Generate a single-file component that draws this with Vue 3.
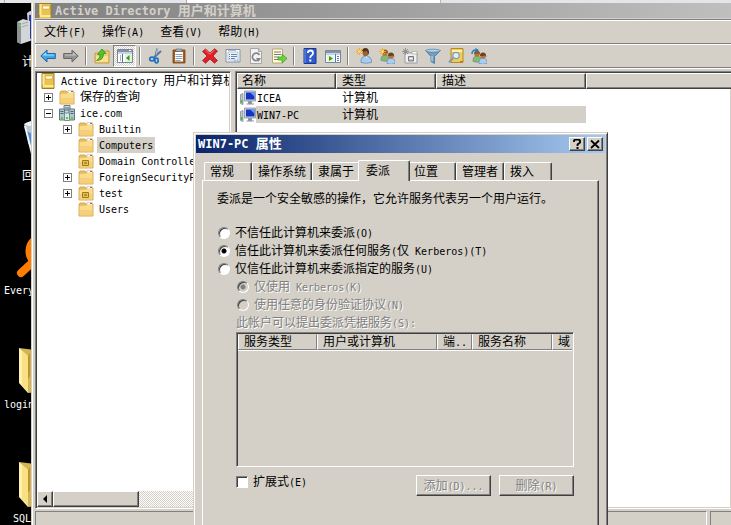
<script setup>
import { h, ref } from 'vue'

// Latin runs are set smaller so that they take half of the width of a Chinese character
const Txt = (props) =>
  h('span', { class: 'txt' }, props.t.match(/[\x00-\x7f]+|[^\x00-\x7f]+/g).map((run) =>
    /[\x00-\x7f]/.test(run) ? h('span', { class: 'latin' }, run) : run))
Txt.props = ['t']

const person = (x, y, hair, shirt) =>
  `<path d="M${x} ${y + 10.5}v-2q0-2.500 3-3.500h2q3 1 3 3.500v2q-4 1.500-8 0z" fill="${shirt}" stroke="#5683b5" stroke-width=".6"/><circle cx="${x + 4}" cy="${y + 3}" r="2.700" fill="#b9733a"/><path d="M${x + 1} ${y + 3}q0-3.500 3-3.500t3.200 3.500v1.500l-1-2q-3 .5-5.200.5z" fill="${hair}"/>`
const spark = '<path d="M3.500 0v7M0 3.500h7M1 1l5 5M6 1L1 6" stroke="#f5a623" stroke-width="1"/><circle cx="3.500" cy="3.500" r="1.300" fill="#ffe27a"/>'
const folder = '<path d="M1 3.500L2 2h5l1 1h7v12H1z" fill="#e9c063" stroke="#c9993c" stroke-width=".8"/><path d="M9 1.500h5.500V4H9z" fill="#fff" stroke="#d2a757" stroke-width=".5"/><path d="M12 2h2v1h-2z" fill="#3b7fd0"/><path d="M1.500 5h6l1-1h6v10.500h-13z" fill="#fbdc8c"/><path d="M2 9h12v5H2z" fill="#f5d079"/>'

const icons = {
  back: '<path d="M.8 8L7 2v3.500h8.300v5H7V14z" fill="#3fa9e8" stroke="#1c64ad"/><path d="M2.500 7.500L6 4.200v2.300h8v1z" fill="#a3dcfa"/>',
  forward: '<path d="M15.200 8L9 2v3.500H.7v5H9V14z" fill="#949494" stroke="#666"/><path d="M13.500 7.500L10 4.200v2.300H2v1z" fill="#c3c3c3"/>',
  up: '<path d="M1 5h5l1-2h8v12H1z" fill="#f3cf6c" stroke="#bd8e32" stroke-width=".8"/><path d="M2 8h12v6H2z" fill="#fadf8d"/><path d="M2.500 12.500Q6 11 6 6.500H3.500L8 1l4 4.500H9.500q0 7-7 7z" fill="#4fc62c" stroke="#268714" stroke-width=".7"/>',
  panes: '<path d="M.5 1.500h15v13H.5z" fill="#fff" stroke="#7b8797"/><path d="M1 2h14v2H1z" fill="#8292ad"/><path d="M12 2.500h2" stroke="#fff"/><path d="M1 5h14" stroke="#9aa6b8"/><path d="M5.500 6v8M3 8h1M3 10h1M3 12h1" stroke="#57708f"/><path d="M8 6h7v8H8z" fill="#e6f3dd"/><path d="M12.500 7v6L9 10z" fill="#28a221"/>',
  cut: '<path d="M9.500 0L7 9M13 3L5.500 10" stroke="#55738f" stroke-width="1.800"/><path d="M9.500 0L8 7" stroke="#d8ecff" stroke-width=".7"/><ellipse cx="4" cy="11" rx="2.300" ry="1.800" fill="none" stroke="#1d72c4" stroke-width="1.700"/><ellipse cx="8.500" cy="12.500" rx="1.700" ry="2.300" fill="none" stroke="#1d72c4" stroke-width="1.700"/>',
  paste: '<path d="M2 2h12v13H2z" fill="#a65d20" stroke="#78400f" stroke-width=".8"/><path d="M4 4h8v9.500H4z" fill="#fff"/><path d="M4.500 6.500h7M4.500 8.500h7M4.500 10.500h7M4.500 12.500h5" stroke="#8ba0b8"/><path d="M5 1h6v2.500H5z" fill="#a9adb5" stroke="#5d6570" stroke-width=".6"/>',
  remove: '<path d="M3.500 1L8 5 12.500.700 15.500 3 11 8l4.500 4.500-3 2.800L8 11l-4.500 4.300L.5 12.500 5 8 .5 3.500z" fill="#df2028" stroke="#a50d13" stroke-width=".7"/><path d="M3.500 2L8 6.200 12.500 2" fill="none" stroke="#ff7870"/>',
  props: '<path d="M1 1.500h14v12.500H1z" fill="#fbfdff" stroke="#8494a6"/><path d="M3 4h10v8H3z" fill="#eef3f9" stroke="#a4b3c4" stroke-width=".7"/><path d="M4 6.500h1m1 0h6M4 8.500h1m1 0h6M4 10.500h1m1 0h4" stroke="#5f8ab9"/><path d="M3 2.500h8" stroke="#b1bfce"/><path d="M9 13h2m1 0h2" stroke="#70a5d5"/>',
  refresh: '<path d="M2.500.5h8l3 3v12h-11z" fill="#f3f3f3" stroke="#a5a5a5"/><path d="M10.500.5v3h3" fill="#d4d4d4" stroke="#a5a5a5"/><path d="M11 11.500A3.800 3.800 0 1 1 11.500 7" fill="none" stroke="#858585" stroke-width="1.700"/><path d="M8 10h5l-2.500 4z" fill="#858585"/>',
  export: '<path d="M1.500 1h10v14h-10z" fill="#fffbe2" stroke="#b9a66a"/><path d="M3 4h7M3 6.500h7M3 9h5M3 11.500h5" stroke="#7b7b70"/><path d="M7 9h4V6l5 4.500-5 4.500v-3H7z" fill="#6bd33a" stroke="#389b18" stroke-width=".7"/>',
  help: '<path d="M2 .5h12v15H2z" fill="#3159c9" stroke="#183891"/><path d="M3 1v14" stroke="#7394ed"/><path d="M5.800 5q0-2.500 2.600-2.500T11 5q0 1.500-1.500 2.400T8.300 10" fill="none" stroke="#fff" stroke-width="1.800"/><path d="M7.300 11.500h2v2h-2z" fill="#fff"/>',
  console: '<path d="M.5 2.500h15v12H.5z" fill="#fff" stroke="#7b8797"/><path d="M1 3h14v2H1z" fill="#8292ad"/><path d="M1 6h14" stroke="#9aa6b8"/><path d="M2 7h7v7H2z" fill="#e9f5e1"/><path d="M4 8v5l4-2.500z" fill="#28a221"/><path d="M10.500 6v8M12 8.500h2M12 10.500h2M12 12.500h2" stroke="#4c78ad"/>',
  user: '<path d="M5 14.500v-2.500q.5-3 4-4h2q4 1 4.500 4v2.500q-5 1.500-10.500 0z" fill="#a9cdef" stroke="#5683b5" stroke-width=".7"/><path d="M9.500 8.500l1 1.500 1-1.500z" fill="#fff"/><ellipse cx="9.500" cy="4.500" rx="3" ry="3.700" fill="#a05f30"/><path d="M6 4Q6 0 9.500 0T13 5l-1 2q0-4-2-4-2 1-4 1z" fill="#54351c"/>' + spark,
  users: person(2, 2, '#8a5a2a', '#86bd60') + person(8, 5, '#67431e', '#a9cdef') + spark,
  newou: '<path d="M3 5h12v10H3z" fill="#f0f0f0" stroke="#9a9a9a"/><path d="M10 3.500h5V6h-5z" fill="#fafafa" stroke="#999" stroke-width=".6"/><path d="M6.500 8.500h5v4.500h-5z" fill="#c3c3c3" stroke="#777"/><path d="M7.500 10.500h3" stroke="#fff"/><path d="M3.500 0v7M0 3.500h7M1 1l5 5M6 1L1 6" stroke="#909090"/>',
  filter: '<path d="M.7 2.500L6 8.500v5l3.500 2V8.500l5.800-6z" fill="#719ec3" stroke="#40709a" stroke-width=".8"/><ellipse cx="8" cy="2.700" rx="7.300" ry="1.500" fill="#b6d4e9" stroke="#4e7da4" stroke-width=".7"/><path d="M7 8v5" stroke="#cbe2f2"/>',
  find: '<path d="M3 .5h12v14H3z" fill="#f0cd5a" stroke="#b78b23"/><path d="M4 2h10v2H4z" fill="#fff3a8"/><path d="M12 13.500h3" stroke="#a97d1c"/><path d="M5 10l-4 4.500" stroke="#8197ad" stroke-width="2"/><circle cx="8" cy="7.500" r="3.200" fill="#dceefa" stroke="#7e9bb3" stroke-width="1.200"/>',
  group: person(2, 3, '#8a5a2a', '#86bd60') + person(8, 5, '#67431e', '#a9cdef') + '<path d="M1 6Q1 2 5 2" fill="none" stroke="#247cc5" stroke-width="1.500"/><path d="M4.500 0L8 2 4.500 4.500z" fill="#247cc5"/>',
  folder,
  ou: folder + '<path d="M4.500 7.500h6v5h-6z" fill="#e3c554" stroke="#9c7a18"/><path d="M6 10h3" stroke="#7d5f0c"/>',
  book: '<path d="M2 .5h12v15H2z" fill="#e9c34e" stroke="#a17c21"/><path d="M2.500 1h2v11h-2z" fill="#fbe899"/><path d="M5.500 3h7v3h-7z" fill="#fffce5" stroke="#bd972e" stroke-width=".5"/><path d="M3 13h10.500" stroke="#fff5b7" stroke-width="1.500"/>',
  domain: '<path d="M5 .5h6v11H5z" fill="#c9d8df" stroke="#667f8a"/><path d="M.5 4h5v11h-5zM10 4h5.500v11H10z" fill="#b2c6cf" stroke="#5f7984"/><path d="M6 3h4M6 5h4M1.500 6.500h3M1.500 8.500h3M11.500 6.500h3M11.500 8.500h3" stroke="#4c6773"/><path d="M5.500 8h5v7.500h-5z" fill="#dbe7eb" stroke="#758d97"/><path d="M2 12h2v2H2zM7 12h2v2H7zM12 12h2v2h-2z" fill="#59ce28"/>',
  computer: '<path d="M.5 4.500L3 3.500v11l-2.500-1z" fill="#c0c6cb" stroke="#77818a" stroke-width=".7"/><path d="M1 10h1.500v3H1z" fill="#46ba3a"/><path d="M4.500 1h11v10h-11z" fill="#c9d1da" stroke="#8290a0" stroke-width=".8"/><path d="M6 2.500h8.500v7H6z" fill="#1735c5"/><path d="M10 2.500h4.500v4z" fill="#6f9af5"/><path d="M8.500 11.500h3v2h-3zM6.500 14h7.500" fill="#8993a0" stroke="#8993a0" stroke-width="1"/>',
}

const menus = ['文件(F)', '操作(A)', '查看(V)', '帮助(H)']
const tools = [
  ['back', '后退'], ['forward', '前进'], null,
  ['up', '向上'], ['panes', '控制台树', true], null,
  ['cut', '剪切'], ['paste', '粘贴'], null,
  ['remove', '删除'], ['props', '属性'], ['refresh', '刷新'], ['export', '导出列表'], null,
  ['help', '帮助'], ['console', '操作窗格'], null,
  ['user', '新建用户'], ['users', '新建组'], ['newou', '新建组织单位'], ['filter', '筛选'], ['find', '查找'], ['group', '添加到组'],
]
const tree = [
  { level: 0, icon: 'book', name: 'Active Directory 用户和计算机' },
  { level: 1, mark: '+', icon: 'folder', name: '保存的查询' },
  { level: 1, mark: '-', icon: 'domain', name: 'ice.com' },
  { level: 2, mark: '+', icon: 'folder', name: 'Builtin' },
  { level: 2, icon: 'folder', name: 'Computers', selected: true },
  { level: 2, icon: 'ou', name: 'Domain Controllers' },
  { level: 2, mark: '+', icon: 'folder', name: 'ForeignSecurityPrincipals' },
  { level: 2, mark: '+', icon: 'ou', name: 'test' },
  { level: 2, icon: 'folder', name: 'Users' },
]
const computers = [
  { name: 'ICEA', type: '计算机' },
  { name: 'WIN7-PC', type: '计算机', selected: true },
]
const tabs = ['常规', '操作系统', '隶属于', '委派', '位置', '管理者', '拨入']
const activeTab = ref('委派')
const trust = ref('any')
const protocol = ref('kerberos')
const expanded = ref(false)
const trustOptions = [
  ['none', '不信任此计算机来委派(O)'],
  ['any', '信任此计算机来委派任何服务(仅 Kerberos)(T)'],
  ['listed', '仅信任此计算机来委派指定的服务(U)'],
]
const protocolOptions = [
  ['kerberos', '仅使用 Kerberos(K)'],
  ['all', '使用任意的身份验证协议(N)'],
]
</script>

<template>
  <div class="screen">
    <div class="strip"><i></i><i></i><i></i><i></i></div>

    <div class="workspace">
      <aside class="desktop">
        <div class="shortcut pc">
          <svg viewBox="0 0 48 48"><path d="M11 6l3-2 30-2v28l-31 4z" fill="#c9ccd6" /><path d="M13 8l28-4v24l-28 4z" fill="#2238a8" /><path d="M1 15l6-3 7 2v20l-9 3-4-2z" fill="#d3d6d8" /><path d="M1 15l4 1v21l-4-2z" fill="#8d9296" /><path d="M6 17l6-2M6 20l6-2" stroke="#a3a8ac" /><path d="M3 17h2v3H3z" fill="#5bd045" /></svg>
          <Txt t="计算机" />
        </div>
        <div class="shortcut bin">
          <svg viewBox="0 0 48 48"><path d="M5 6l30-4-5 42q-8 4-15 0z" fill="#b7cad8" /><path d="M5 6q14 7 30-4-14-4-30 4z" fill="#eff5f9" /><path d="M8 13l8 5-3 9-4-1zM12 30l7-4v12l-5-2z" fill="#4a8edb" /><path d="M6 8l9 36" stroke="#f1f6fa" stroke-width="2" /></svg>
          <Txt t="回收站" />
        </div>
        <div class="shortcut search">
          <svg viewBox="0 0 48 48"><circle cx="28" cy="16" r="15" fill="none" stroke="#ff7e00" stroke-width="7" /><path d="M17 27L5 38" stroke="#ff7e00" stroke-width="8" stroke-linecap="round" /></svg>
          <Txt t="Everything" />
        </div>
        <div class="shortcut file">
          <svg viewBox="0 0 48 48"><path d="M2 1l38 5v38l-29 2z" fill="#d6b451" /><path d="M2 1l9 8v37L2 36z" fill="#fff0ac" /><path d="M5 4l6 5v36l-6-7z" fill="#f9e085" /><path d="M11 9l2-3v23l-2 3z" fill="#b99531" /></svg>
          <Txt t="login" />
        </div>
        <div class="shortcut sql">
          <svg viewBox="0 0 48 48"><path d="M2 1l38 5v38l-29 2z" fill="#d6b451" /><path d="M2 1l9 8v37L2 36z" fill="#fff0ac" /><path d="M5 4l6 5v36l-6-7z" fill="#f9e085" /><path d="M11 9l2-3v23l-2 3z" fill="#b99531" /></svg>
          <Txt t="SQL" />
        </div>
      </aside>

      <main class="window">
        <header class="titlebar inactive">
          <svg class="icon" viewBox="0 0 16 16" v-html="icons.book"></svg>
          <Txt t="Active Directory 用户和计算机" />
        </header>
        <nav class="menubar">
          <button v-for="m in menus" :key="m" type="button"><Txt :t="m" /></button>
        </nav>
        <div class="toolbar" role="toolbar">
          <template v-for="(tool, i) in tools" :key="i">
            <button v-if="tool" type="button" :class="{ pressed: tool[2] }" :aria-label="tool[1]">
              <svg class="icon" viewBox="0 0 16 16" v-html="icons[tool[0]]"></svg>
            </button>
            <i v-else class="sep"></i>
          </template>
        </div>

        <div class="panes">
          <section class="treepane">
            <ul class="tree">
              <li v-for="n in tree" :key="n.name" :class="'level' + n.level">
                <button v-if="n.mark" type="button" class="expander" :aria-label="n.name">
                  <svg viewBox="0 0 7 7"><path :d="n.mark === '+' ? 'M1 3.5h5M3.5 1v5' : 'M1 3.500h5'" stroke="#000" /></svg>
                </button>
                <i v-else-if="n.level" class="noexpander"></i>
                <svg class="icon" viewBox="0 0 16 16" v-html="icons[n.icon]"></svg>
                <span class="name" :class="{ selected: n.selected }"><Txt :t="n.name" /></span>
              </li>
            </ul>
            <div class="scrollbar">
              <button type="button" aria-label="向左滚动"><svg viewBox="0 0 8 8"><path d="M6 0v8L2 4z" /></svg></button>
              <span class="thumb"></span>
            </div>
          </section>

          <section class="listpane">
            <table>
              <colgroup><col class="c-name"><col class="c-type"><col class="c-desc"><col></colgroup>
              <thead>
                <tr><th><Txt t="名称" /></th><th><Txt t="类型" /></th><th><Txt t="描述" /></th><th></th></tr>
              </thead>
              <tbody>
                <tr v-for="c in computers" :key="c.name" :class="{ selected: c.selected }">
                  <td><div class="cell"><svg class="icon" viewBox="0 0 16 16" v-html="icons.computer"></svg><Txt :t="c.name" /></div></td>
                  <td><Txt :t="c.type" /></td>
                  <td></td>
                  <td></td>
                </tr>
              </tbody>
            </table>
          </section>
        </div>
        <footer class="statusbar"><span></span><span></span></footer>
      </main>
    </div>

    <section class="dialog" role="dialog" aria-label="WIN7-PC 属性">
      <header class="titlebar active">
        <Txt t="WIN7-PC 属性" />
        <div class="caption">
          <button type="button" aria-label="帮助"><svg viewBox="0 0 10 10"><path d="M2 3V1.500L3 .700h4l1 .8v2L5.500 5.500V7" fill="none" stroke="#000" stroke-width="1.800" /><path d="M4.500 8h2v2h-2z" /></svg></button>
          <button type="button" aria-label="关闭"><svg viewBox="0 0 10 10"><path d="M1 1.500l8 7.500M9 1.500L1 9" stroke="#000" stroke-width="1.800" /></svg></button>
        </div>
      </header>
      <div class="tabs" role="tablist">
        <button v-for="t in tabs" :key="t" type="button" role="tab" :aria-selected="t === activeTab" :class="{ current: t === activeTab }" @click="activeTab = t">
          <Txt :t="t" />
        </button>
      </div>
      <div class="page">
        <p><Txt t="委派是一个安全敏感的操作，它允许服务代表另一个用户运行。" /></p>
        <div class="options">
          <label v-for="o in trustOptions" :key="o[0]">
            <input v-model="trust" type="radio" name="trust" :value="o[0]"><Txt :t="o[1]" />
          </label>
          <label v-for="o in protocolOptions" :key="o[0]" class="sub disabled">
            <input v-model="protocol" type="radio" name="protocol" :value="o[0]" disabled><Txt :t="o[1]" />
          </label>
        </div>
        <div class="services">
          <div id="services-label" class="caption-line disabled"><Txt t="此帐户可以提出委派凭据服务(S):" /></div>
          <div class="listbox">
            <table aria-labelledby="services-label">
              <colgroup><col class="s-type"><col class="s-user"><col class="s-port"><col class="s-name"><col></colgroup>
              <thead>
                <tr><th><Txt t="服务类型" /></th><th><Txt t="用户或计算机" /></th><th><Txt t="端.." /></th><th><Txt t="服务名称" /></th><th><Txt t="域" /></th></tr>
              </thead>
            </table>
          </div>
          <div class="actions">
            <label><input v-model="expanded" type="checkbox"><Txt t="扩展式(E)" /></label>
            <button type="button" class="disabled" disabled><Txt t="添加(D)..." /></button>
            <button type="button" class="disabled" disabled><Txt t="删除(R)" /></button>
          </div>
        </div>
      </div>
    </section>
  </div>
</template>

<style>
body {
  background: #000;
}
.txt {
  white-space: pre;
}
.txt .latin {
  font-size: 10px;
  line-height: 1;
}
.titlebar .txt {
  font-size: 13px;
  font-weight: bold;
}
.titlebar .txt .latin {
  font-size: 12px;
}
</style>

<style scoped>
.screen {
  --face: #d4d0c8;
  --shade: #808080;
  --dark: #404040;
  position: relative;
  height: 100vh;
  display: flex;
  flex-direction: column;
  overflow: hidden;
  background: #000;
  color: #000;
  font: 12px/16px "DejaVu Sans Mono", "Noto Sans CJK SC", monospace;
}
button {
  font: inherit;
  color: inherit;
  padding: 0;
  margin: 0;
  border: 0;
  background: transparent;
}
.icon {
  width: 16px;
  height: 16px;
  flex: none;
}
.strip {
  display: flex;
  height: 3px;
  flex: none;
}
.strip i { background: #e3e5e8; }
.strip i:nth-child(1) { width: 5px; border-right: 1px solid #a9abae; box-sizing: border-box; }
.strip i:nth-child(2) { width: 181px; border-right: 1px solid #a9abae; }
.strip i:nth-child(3) { width: 253px; background: #fff; border-right: 1px solid #b9bbbe; }
.strip i:nth-child(4) { flex: 1; }
.workspace {
  flex: 1;
  min-height: 0;
  display: flex;
}

/* desktop shortcuts, partly covered by the window */
.desktop {
  position: relative;
  width: 31px;
  flex: none;
  overflow: hidden;
  color: #fff;
}
.shortcut {
  position: absolute;
}
.shortcut svg {
  position: absolute;
  width: 48px;
  height: 48px;
}
.pc { left: 22px; top: 51px; }
.pc svg { left: -6px; top: -47px; }
.bin { left: 22px; top: 165px; }
.bin svg { left: -3px; top: -50px; }
.search { left: 4px; top: 279px; }
.search svg { left: 12px; top: -47px; }
.file { left: 4px; top: 393px; }
.file svg { left: 13px; top: -49px; }
.sql { left: 13px; top: 507px; }
.sql svg { left: 4px; top: -49px; }

/* console window */
.window {
  flex: 1;
  min-width: 0;
  display: flex;
  flex-direction: column;
  background: var(--face);
  box-shadow: inset 1px 0 var(--face), inset 2px 0 #fff;
  padding-left: 4px;
}
.titlebar {
  display: flex;
  align-items: center;
  flex: none;
}
.inactive {
  height: 15px;
  gap: 2px;
  padding-left: 2px;
  margin-bottom: 1px;
  overflow: hidden;
  color: var(--face);
  background: linear-gradient(90deg, #808080, #bfbfbf);
}
.menubar,
.toolbar {
  display: flex;
  align-items: center;
  height: 24px;
  box-sizing: border-box;
  flex: none;
  border-top: 1px solid var(--shade);
  box-shadow: inset 1px 1px #fff;
}
.menubar {
  padding: 1px 0 0 1px;
}
.menubar button {
  padding: 0 8px;
}
.toolbar {
  height: 25px;
  padding: 2px 0 1px 1px;
  border-bottom: 1px solid var(--shade);
}
.toolbar button {
  width: 23px;
  height: 22px;
  flex: none;
  display: flex;
  align-items: center;
  justify-content: center;
}
.toolbar .pressed {
  border: 1px solid;
  border-color: var(--shade) #fff #fff var(--shade);
  background: repeating-conic-gradient(#fff 0 25%, var(--face) 0 50%) 0 0 / 2px 2px;
  box-sizing: border-box;
}
.sep {
  width: 2px;
  height: 18px;
  margin: 0 3px;
  box-sizing: border-box;
  border-left: 1px solid var(--shade);
  border-right: 1px solid #fff;
}
.panes {
  flex: 1;
  min-height: 0;
  display: flex;
  gap: 4px;
  padding-top: 3px;
  box-shadow: inset 0 1px #fff;
}
.treepane,
.listpane {
  display: flex;
  flex-direction: column;
  min-width: 0;
  box-sizing: border-box;
  background: #fff;
  border: 1px solid;
  border-color: var(--shade) #fff #fff var(--shade);
  box-shadow: inset 1px 1px var(--dark), inset -1px -1px var(--face);
  padding: 1px;
}
.treepane {
  width: 196px;
  flex: none;
}
.listpane {
  flex: 1;
  border-right: 0;
  padding-right: 0;
}
.tree {
  flex: 1;
  min-height: 0;
  margin: 0;
  padding: 0;
  list-style: none;
  overflow: hidden;
}
.tree li {
  display: flex;
  align-items: center;
  height: 16px;
  padding-left: 7px;
}
.tree .level0 { padding-left: 3px; }
.tree .level2 { padding-left: 26px; }
.expander,
.noexpander {
  width: 9px;
  height: 9px;
  margin-right: 6px;
  flex: none;
  box-sizing: border-box;
}
.expander {
  border: 1px solid var(--shade);
}
.expander svg {
  display: block;
  width: 7px;
  height: 7px;
}
.name {
  margin-left: 3px;
  padding: 0 2px;
  height: 16px;
  white-space: nowrap;
}
.name.selected {
  background: var(--face);
}
.scrollbar {
  display: flex;
  height: 16px;
  flex: none;
  background: repeating-conic-gradient(#fff 0 25%, var(--face) 0 50%) 0 0 / 2px 2px;
}
.scrollbar button,
.thumb,
.caption button,
.actions button {
  box-sizing: border-box;
  background: var(--face);
  border: 1px solid;
  border-color: #fff var(--dark) var(--dark) #fff;
  box-shadow: inset -1px -1px var(--shade);
}
.scrollbar button {
  width: 16px;
  display: flex;
  align-items: center;
  justify-content: center;
}
.scrollbar svg {
  width: 8px;
  height: 8px;
}
.thumb {
  width: 86px;
}
table {
  width: 100%;
  table-layout: fixed;
  border-collapse: separate;
  border-spacing: 0;
}
th, td {
  padding: 0;
  text-align: left;
  font-weight: normal;
  white-space: nowrap;
  overflow: hidden;
}
.c-name { width: 99px; }
.c-type { width: 100px; }
.c-desc { width: 150px; }
.listpane th {
  height: 16px;
  line-height: 14px;
  box-sizing: border-box;
  padding-left: 5px;
  background: var(--face);
  border: 1px solid;
  border-color: #fff var(--dark) var(--dark) #fff;
  box-shadow: inset -1px -1px var(--shade);
}
.listpane th:first-child {
  padding-left: 4px;
}
.listpane th:last-child {
  border-right: 0;
  box-shadow: inset 0 -1px var(--shade);
}
.listpane td {
  height: 17px;
  padding-left: 6px;
}
.listpane td:first-child {
  padding-left: 3px;
}
.cell {
  display: flex;
  align-items: center;
  gap: 1px;
}
.listpane .selected td:nth-child(-n+3) {
  background: var(--face);
}
.listpane .selected td:first-child {
  background: linear-gradient(90deg, #fff 19px, var(--face) 19px);
}
.statusbar {
  display: flex;
  gap: 3px;
  height: 16px;
  padding-top: 2px;
  box-sizing: border-box;
  flex: none;
}
.statusbar span {
  width: 21px;
  border-top: 1px solid var(--shade);
  border-left: 1px solid var(--shade);
  box-sizing: border-box;
}
.statusbar span:first-child {
  flex: 1;
  border-right: 1px solid #fff;
}

/* properties dialog, floating over the console */
.dialog {
  position: absolute;
  left: 193px;
  top: 132px;
  bottom: 0;
  width: 415px;
  box-sizing: border-box;
  display: flex;
  flex-direction: column;
  padding: 2px 2px 0;
  background: var(--face);
  border: 1px solid;
  border-color: var(--face) var(--dark) var(--face) var(--face);
  border-bottom: 0;
  box-shadow: inset 1px 1px #fff, inset -1px 0 var(--shade);
}
.active {
  height: 18px;
  padding: 0 2px;
  color: #fff;
  background: linear-gradient(90deg, #0a246a, #a6caf0);
}
.caption {
  display: flex;
  gap: 2px;
  margin-left: auto;
}
.caption button {
  width: 16px;
  height: 14px;
  display: flex;
  align-items: center;
  justify-content: center;
}
.caption svg {
  width: 10px;
  height: 10px;
}
.tabs {
  display: flex;
  align-items: flex-end;
  height: 20px;
  margin-top: 7px;
  padding-left: 8px;
  flex: none;
}
.tabs button {
  min-width: 48px;
  height: 18px;
  padding: 0 5px;
  box-sizing: border-box;
  text-align: left;
  line-height: 18px;
  border: 1px solid;
  border-color: #fff var(--dark) transparent #fff;
  border-bottom: 0;
  border-radius: 2px 2px 0 0;
  box-shadow: inset -1px 0 var(--shade);
}
.tabs .current {
  position: relative;
  min-width: 52px;
  height: 21px;
  margin: 0 -2px -1px;
  padding: 0 7px;
  background: var(--face);
}
.page {
  flex: 1;
  margin: 0 6px;
  padding: 9px 24px 0 14px;
  border: 1px solid;
  border-color: #fff var(--dark) transparent #fff;
  border-bottom: 0;
  box-shadow: inset -1px 0 var(--shade);
}
.page p {
  margin: 0 0 16px;
  line-height: 18px;
}
.options {
  display: flex;
  flex-direction: column;
  padding-left: 1px;
}
label {
  display: flex;
  align-items: center;
  gap: 5px;
  height: 18px;
  line-height: 18px;
}
.sub {
  padding-left: 19px;
}
.disabled {
  color: var(--shade);
  text-shadow: 1px 1px #fff;
}
input {
  appearance: none;
  width: 12px;
  height: 12px;
  margin: 0;
  flex: none;
  box-sizing: border-box;
  background: #fff;
  border: 1px solid;
  border-color: var(--shade) #fff #fff var(--shade);
  box-shadow: inset 1px 1px var(--dark);
}
input[type="radio"] {
  border-radius: 50%;
}
input[type="radio"]:checked {
  background: radial-gradient(circle, #000 2px, #fff 3px);
}
input[type="radio"]:disabled {
  background: var(--face);
}
input[type="radio"]:disabled:checked {
  background: radial-gradient(circle, #808080 2px, var(--face) 3px);
}
.services {
  margin-left: 19px;
}
.caption-line {
  height: 18px;
  line-height: 18px;
}
.listbox {
  height: 135px;
  box-sizing: border-box;
  padding: 1px;
  border: 1px solid;
  border-color: var(--shade) #fff #fff var(--shade);
  box-shadow: inset 1px 1px var(--dark);
}
.s-type { width: 79px; }
.s-user { width: 120px; }
.s-port { width: 35px; }
.s-name { width: 80px; }
.listbox th {
  height: 16px;
  line-height: 14px;
  box-sizing: border-box;
  padding-left: 5px;
  border: 1px solid;
  border-color: transparent var(--shade) var(--shade) #fff;
  box-shadow: 0 1px #fff;
}
.listbox th:last-child {
  border-right: 0;
}
.actions {
  display: flex;
  gap: 8px;
  margin-top: 8px;
}
.actions label {
  margin-right: auto;
  height: 14px;
}
.actions button {
  width: 75px;
  height: 21px;
}
</style>
